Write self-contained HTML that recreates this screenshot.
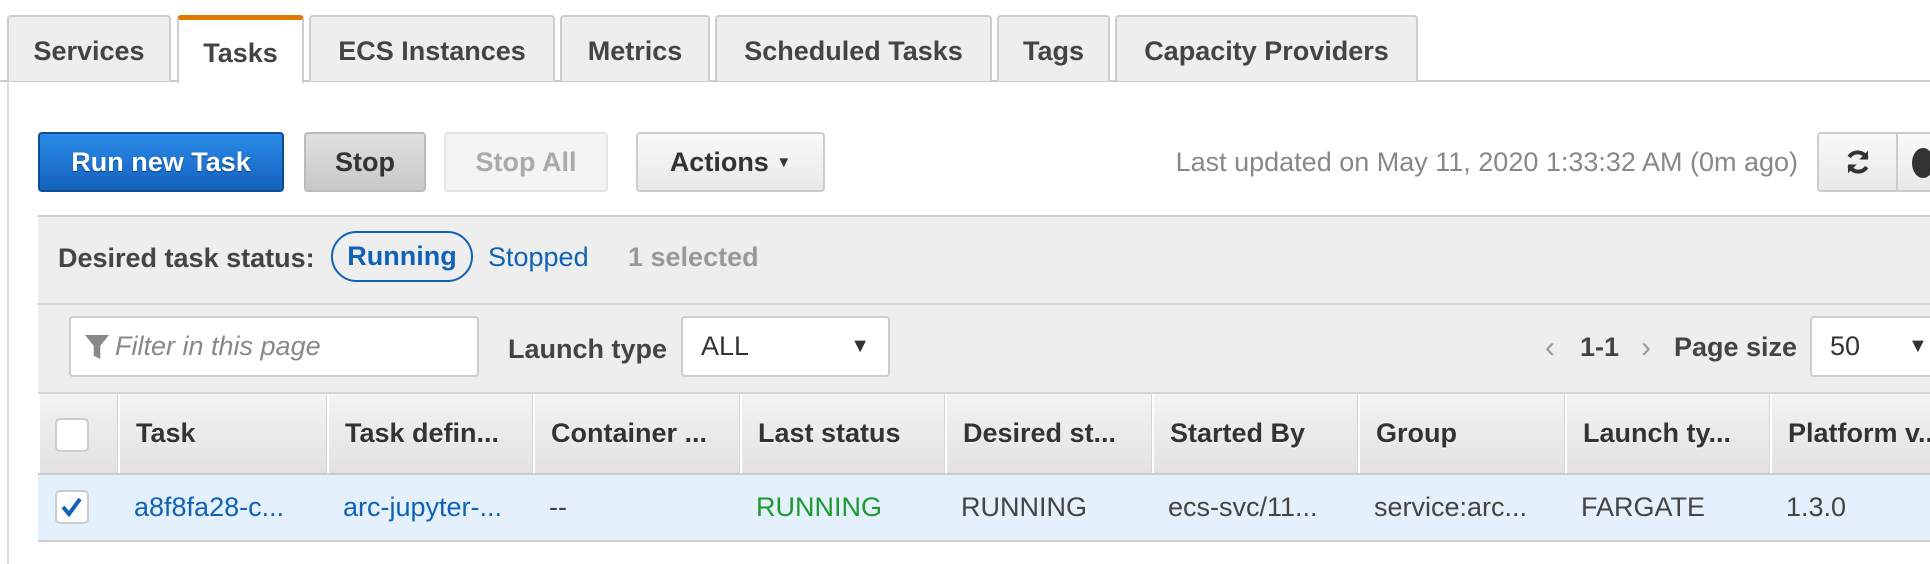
<!DOCTYPE html>
<html><head><meta charset="utf-8"><style>
*{box-sizing:border-box;margin:0;padding:0}
body{width:1930px;height:564px;overflow:hidden;background:#fff;font-family:"Liberation Sans",Arial,sans-serif;color:#444;position:relative}
.a{position:absolute}
.tab{position:absolute;top:15px;height:66px;background:#eee;border:2px solid #ccc;border-bottom:none;border-radius:4px 4px 0 0;font-weight:bold;font-size:27px;color:#444;display:flex;align-items:center;justify-content:center;padding-top:4px}
.tab.act{background:#fff;border-top:5px solid #e07b00;height:68px;z-index:2}
.btn{position:absolute;top:132px;height:60px;border-radius:4px;font-weight:bold;font-size:27px;display:flex;align-items:center;justify-content:center}
.hd{position:absolute;top:394px;height:79px;display:flex;align-items:center;padding-left:16px;font-weight:bold;font-size:27px;color:#333;text-shadow:0 1px 0 #fff;border-left:2px solid #fff;border-right:1px solid #d5d5d5;white-space:nowrap;overflow:hidden}
.cell{position:absolute;top:473px;height:68px;display:flex;align-items:center;padding-left:16px;font-size:27px;color:#444;white-space:nowrap}
.lnk{color:#0f62b5}
</style></head><body>
<div class="a" style="left:0;top:80px;width:1930px;height:2px;background:#ccc"></div>
<div class="a" style="left:7px;top:80px;width:2px;height:484px;background:#ddd"></div>
<div class="tab" style="left:7px;width:164px">Services</div>
<div class="tab act" style="left:177px;width:127px">Tasks</div>
<div class="tab" style="left:309px;width:246px">ECS Instances</div>
<div class="tab" style="left:560px;width:150px">Metrics</div>
<div class="tab" style="left:715px;width:277px">Scheduled Tasks</div>
<div class="tab" style="left:997px;width:113px">Tags</div>
<div class="tab" style="left:1115px;width:303px">Capacity Providers</div>

<div class="btn" style="left:38px;width:246px;background:linear-gradient(#2b8be8,#1461bd);border:2px solid #0d4d94;color:#fff;text-shadow:0 1px 1px #063a75">Run new Task</div>
<div class="btn" style="left:304px;width:122px;background:linear-gradient(#e0e0e0,#c8c8c8);border:2px solid #bbb;color:#333">Stop</div>
<div class="btn" style="left:444px;width:164px;background:#f4f4f4;border:2px solid #e4e4e4;color:#aaa">Stop All</div>
<div class="btn" style="left:636px;width:189px;background:linear-gradient(#fafafa,#e8e8e8);border:2px solid #ccc;color:#333">Actions&nbsp;<span style="font-size:15px">▼</span></div>
<div class="a" style="left:1000px;width:798px;top:147px;text-align:right;font-size:27px;color:#888;white-space:nowrap">Last updated on May 11, 2020 1:33:32 AM (0m ago)</div>
<div class="btn" style="left:1817px;width:140px;background:linear-gradient(#fafafa,#e8e8e8);border:2px solid #ccc;color:#333;justify-content:flex-start;padding-left:24px">
<svg width="30" height="30" viewBox="0 0 24 24"><path d="M19 9A8 8 0 0 0 5 8" fill="none" stroke="#333" stroke-width="3.2"/><path d="M20 3v7h-7z" fill="#333"/><path d="M5 15a8 8 0 0 0 14 1" fill="none" stroke="#333" stroke-width="3.2"/><path d="M4 21v-7h7z" fill="#333"/></svg></div>
<div class="a" style="left:1896px;top:134px;width:2px;height:56px;background:#ccc"></div>
<div class="a" style="left:1912px;top:148px;width:22px;height:30px;border-radius:50%;background:#333"></div>

<div class="a" style="left:38px;top:215px;width:1892px;height:327px;background:#eee;border-top:2px solid #ccc"></div>
<div class="a" style="left:58px;top:243px;font-size:27px;font-weight:bold;color:#444">Desired task status:</div>
<div class="a" style="left:331px;top:231px;width:142px;height:51px;border:2px solid #0f62b5;border-radius:26px;color:#0f62b5;font-weight:bold;font-size:27px;display:flex;align-items:center;justify-content:center">Running</div>
<div class="a lnk" style="left:488px;top:242px;font-size:27px">Stopped</div>
<div class="a" style="left:628px;top:242px;font-size:27px;color:#999;font-weight:bold">1 selected</div>
<div class="a" style="left:38px;top:303px;width:1892px;height:2px;background:#d5d5d5"></div>
<div class="a" style="left:69px;top:316px;width:410px;height:61px;background:#fff;border:2px solid #ccc;border-radius:4px;display:flex;align-items:center;padding-left:14px;font-size:27px;color:#888;font-style:italic"><svg width="24" height="30" viewBox="0 0 22 26" style="margin-right:6px"><path d="M0 2h22l-8 10v12l-6-3v-9z" fill="#888"/></svg>Filter in this page</div>
<div class="a" style="left:508px;top:334px;font-size:27px;font-weight:bold">Launch type</div>
<div class="a" style="left:681px;top:316px;width:209px;height:61px;background:#fff;border:2px solid #ccc;border-radius:4px;display:flex;align-items:center;padding-left:18px;font-size:27px;color:#333">ALL<span style="position:absolute;right:18px;font-size:20px">▼</span></div>
<div class="a" style="left:1545px;top:331px;font-size:30px;color:#999">‹</div>
<div class="a" style="left:1580px;top:332px;font-size:27px;font-weight:bold;color:#444">1-1</div>
<div class="a" style="left:1641px;top:331px;font-size:30px;color:#999">›</div>
<div class="a" style="left:1674px;top:332px;font-size:27px;font-weight:bold;color:#444">Page size</div>
<div class="a" style="left:1810px;top:316px;width:140px;height:61px;background:#fff;border:2px solid #ccc;border-radius:4px;display:flex;align-items:center;padding-left:18px;font-size:27px;color:#333">50<span style="position:absolute;left:96px;font-size:20px">▼</span></div>
<div class="a" style="left:38px;top:392px;width:1892px;height:2px;background:#d5d5d5"></div>

<div class="a" style="left:38px;top:394px;width:1892px;height:79px;background:linear-gradient(#f3f3f3,#e2e2e2)"></div>
<div class="hd" style="left:38px;width:80px"></div>
<div class="a" style="left:55px;top:418px;width:34px;height:34px;background:#fff;border:2px solid #ccc;border-radius:5px"></div>
<div class="hd" style="left:118px;width:209px">Task</div>
<div class="hd" style="left:327px;width:206px">Task defin...</div>
<div class="hd" style="left:533px;width:207px">Container ...</div>
<div class="hd" style="left:740px;width:205px">Last status</div>
<div class="hd" style="left:945px;width:207px">Desired st...</div>
<div class="hd" style="left:1152px;width:206px">Started By</div>
<div class="hd" style="left:1358px;width:207px">Group</div>
<div class="hd" style="left:1565px;width:205px">Launch ty...</div>
<div class="hd" style="left:1770px;width:170px">Platform v...</div>

<div class="a" style="left:38px;top:473px;width:1892px;height:69px;background:#e4f0fc;border-top:2px solid #ccc;border-bottom:2px solid #ccc"></div>
<div class="a" style="left:55px;top:490px;width:34px;height:34px;background:#fff;border:2px solid #ccc;border-radius:5px"><svg width="30" height="30" viewBox="0 0 30 30"><path d="M6 15l6 7 11-15" fill="none" stroke="#0f62b5" stroke-width="4"/></svg></div>
<div class="cell lnk" style="left:118px">a8f8fa28-c...</div>
<div class="cell lnk" style="left:327px">arc-jupyter-...</div>
<div class="cell" style="left:533px">--</div>
<div class="cell" style="left:740px;color:#1d9a2f">RUNNING</div>
<div class="cell" style="left:945px">RUNNING</div>
<div class="cell" style="left:1152px">ecs-svc/11...</div>
<div class="cell" style="left:1358px">service:arc...</div>
<div class="cell" style="left:1565px">FARGATE</div>
<div class="cell" style="left:1770px">1.3.0</div>
</body></html>
